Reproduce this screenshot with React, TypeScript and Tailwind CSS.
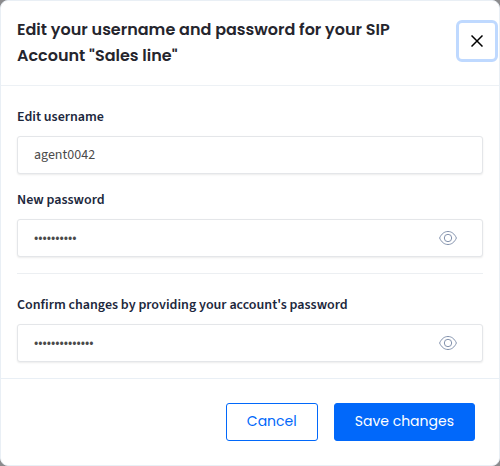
import { useState } from 'react'
import type { InputHTMLAttributes } from 'react'

const inputClass =
  "block h-[38px] w-full rounded-[3px] border border-[#e4e6e9] bg-white pl-4 pr-12 text-[14px] text-[#4a4a4a] shadow-[0_1px_2px_rgba(0,0,0,0.08)] outline-none focus:border-[#0168fa]"

function CloseIcon() {
  return (
    <svg className="h-3 w-3" viewBox="0 0 12 12" fill="none" stroke="currentColor" strokeWidth="1.5" aria-hidden="true">
      <path d="M0.5 0.5 11.5 11.5M11.5 0.5 0.5 11.5" />
    </svg>
  )
}

function EyeIcon() {
  return (
    <svg className="h-4 w-[18px]" viewBox="0 0 18 16" fill="none" stroke="currentColor" aria-hidden="true">
      <path d="M0.6 8C2.5 3.8 5.4 1.5 9 1.5S15.5 3.8 17.4 8C15.5 12.2 12.6 14.5 9 14.5S2.5 12.2 0.6 8Z" />
      <circle cx="9" cy="8" r="3.7" />
    </svg>
  )
}

function Label({ htmlFor, children }: { htmlFor: string; children: string }) {
  return (
    <label htmlFor={htmlFor} className="mb-[7px] block text-[14px] leading-6 font-semibold text-[#1c273c]">
      {children}
    </label>
  )
}

function PasswordInput({ id, ...props }: InputHTMLAttributes<HTMLInputElement>) {
  const [visible, setVisible] = useState(false)

  return (
    <div className="relative">
      <input id={id} type={visible ? 'text' : 'password'} className={inputClass} {...props} />
      <button
        type="button"
        aria-label={visible ? 'Hide password' : 'Show password'}
        onClick={() => setVisible(!visible)}
        className="absolute inset-y-0 right-4 flex w-[38px] items-center justify-center text-[#8392ad]"
      >
        <EyeIcon />
      </button>
    </div>
  )
}

export default function App() {
  return (
    <div className="min-h-screen bg-[#8b8b8d] font-['Source_Sans_Pro','Source_Sans_3','Noto_Sans_CJK_JP',sans-serif]">
      <form
        role="dialog"
        aria-labelledby="dialog-title"
        onSubmit={(e) => e.preventDefault()}
        className="rounded-lg border border-[#e9eff5] bg-white"
      >
        <header className="flex items-start justify-between border-b border-[#edf1f5] py-4 pr-px pl-4">
          <h1
            id="dialog-title"
            className="max-w-[400px] font-['Poppins','Inter',sans-serif] text-[16px] leading-[26px] font-semibold text-[#25252d]"
          >
            Edit your username and password for your SIP Account "Sales line"
          </h1>
          <button
            type="button"
            aria-label="Close"
            className="mt-[3px] flex h-[42px] w-[42px] shrink-0 items-center justify-center rounded-md border-3 border-[#bfd9ff] text-black"
          >
            <CloseIcon />
          </button>
        </header>

        <div className="px-4 pt-[19px] pb-4">
          <Label htmlFor="username">Edit username</Label>
          <input id="username" type="text" defaultValue="agent0042" className={inputClass} />

          <div className="mt-[14px] border-b border-[#eceff2] pb-4">
            <Label htmlFor="new-password">New password</Label>
            <PasswordInput id="new-password" defaultValue="a1b2c3d4e5" />
          </div>

          <div className="mt-[19px]">
            <Label htmlFor="account-password">Confirm changes by providing your account's password</Label>
            <PasswordInput id="account-password" defaultValue="a1b2c3d4e5f6g7" />
          </div>
        </div>

        <footer className="flex justify-end gap-4 border-t border-[#e9eff5] p-6 font-['Poppins','Inter',sans-serif] text-[14px]">
          <button type="button" className="h-[38px] rounded-[3px] border border-[#0168fa] px-5 pb-px text-[#0168fa]">
            Cancel
          </button>
          <button type="submit" className="h-[38px] rounded-[3px] border border-[#0168fa] bg-[#0168fa] px-5 pb-px text-white">
            Save changes
          </button>
        </footer>
      </form>
    </div>
  )
}
